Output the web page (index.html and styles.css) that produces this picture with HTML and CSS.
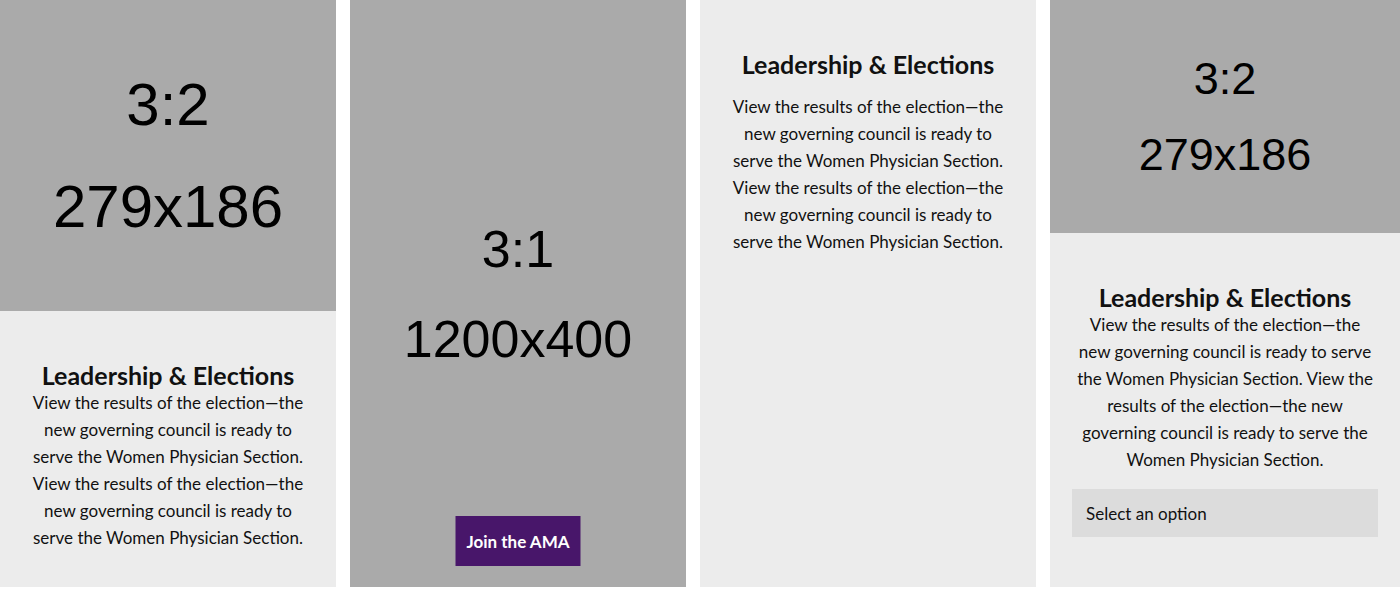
FILE: index.html
```html
<!DOCTYPE html>
<html lang="en">
<head>
<meta charset="utf-8">
<title>Cards</title>
<link rel="stylesheet" href="styles.css">
</head>
<body>
<main class="grid">
  <article class="card">
    <div class="ph ph-lg"><span>3:2</span><span>279x186</span></div>
    <div class="body">
      <h2 class="title">Leadership &amp; Elections</h2>
      <p class="text">View the results of the election—the new governing council is ready to serve the Women Physician Section. View the results of the election—the new governing council is ready to serve the Women Physician Section.</p>
    </div>
  </article>
  <article class="card card-hero">
    <div class="ph ph-md"><span>3:1</span><span>1200x400</span></div>
    <a class="btn" href="#">Join the AMA</a>
  </article>
  <article class="card">
    <div class="body">
      <h2 class="title title-spaced">Leadership &amp; Elections</h2>
      <p class="text">View the results of the election—the new governing council is ready to serve the Women Physician Section. View the results of the election—the new governing council is ready to serve the Women Physician Section.</p>
    </div>
  </article>
  <article class="card">
    <div class="ph ph-sm"><span>3:2</span><span>279x186</span></div>
    <div class="body">
      <h2 class="title">Leadership &amp; Elections</h2>
      <p class="text">View the results of the election—the new governing council is ready to serve the Women Physician Section. View the results of the election—the new governing council is ready to serve the Women Physician Section.</p>
      <div class="select">Select an option</div>
    </div>
  </article>
</main>
</body>
</html>
```

FILE: styles.css
```css
html, body {
  margin: 0;
  padding: 0;
  background: #ffffff;
}
body {
  font-family: Lato, "Open Sans", sans-serif;
  color: #111111;
}
.grid {
  display: grid;
  grid-template-columns: 336px 336px 336px 1fr;
  column-gap: 14px;
  height: 587px;
}
.card {
  background: #ececec;
  display: flex;
  flex-direction: column;
  position: relative;
  overflow: hidden;
}
.ph {
  background: #aaaaaa;
  display: flex;
  flex-direction: column;
  align-items: center;
  justify-content: center;
  font-family: "Liberation Sans", Arial, sans-serif;
  color: #000;
  flex-shrink: 0;
}
.ph-lg {
  height: 311px;
  font-size: 60px;
  line-height: 102px;
}
.ph-md {
  flex: 1;
  font-size: 52px;
  line-height: 90px;
}
.ph-sm {
  height: 233px;
  font-size: 45px;
  line-height: 76px;
}
.card-hero {
  background: #aaaaaa;
}
.btn {
  position: absolute;
  left: 50%;
  bottom: 21px;
  transform: translateX(-50%);
  width: 125px;
  height: 50px;
  background: #48166a;
  color: #ffffff;
  font-weight: 700;
  font-size: 17px;
  display: flex;
  align-items: center;
  justify-content: center;
  text-decoration: none;
}
.body {
  padding: 50px 22px 0;
  text-align: center;
}
.title {
  margin: 0;
  font-size: 25px;
  line-height: 28px;
  font-weight: 700;
}
.title-spaced {
  margin-bottom: 15px;
}
.text {
  margin: 0;
  font-size: 17px;
  line-height: 27px;
}
.select {
  margin-top: 16px;
  height: 48px;
  background: #dcdcdc;
  text-align: left;
  padding-left: 14px;
  display: flex;
  align-items: center;
  font-size: 17px;
}
```
